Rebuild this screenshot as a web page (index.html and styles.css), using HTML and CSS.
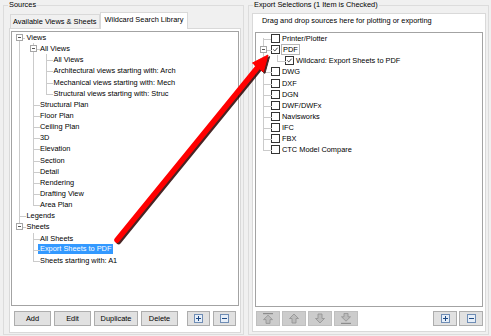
FILE: index.html
```html
<!DOCTYPE html>
<html lang="en">
<head>
  <meta charset="UTF-8" />
  <title>Export Setup</title>
  <link rel="stylesheet" href="styles.css">
</head>
<body>
  <div class="window">
    <fieldset class="group sources">
      <legend>Sources</legend>
      <div class="tabs">
        <div class="tab">Available Views &amp; Sheets</div>
        <div class="tab active">Wildcard Search Library</div>
      </div>
      <div class="tab-page">
        <div class="tree-box">
          <ul class="tree">
            <li><span class="exp"></span><span class="row">Views</span>
              <ul>
                <li><span class="exp"></span><span class="row">All Views</span>
                  <ul>
                    <li><span class="row">All Views</span></li>
                    <li><span class="row">Architectural views starting with: Arch</span></li>
                    <li><span class="row">Mechanical views starting with: Mech</span></li>
                    <li><span class="row">Structural views starting with: Struc</span></li>
                  </ul>
                </li>
                <li><span class="row">Structural Plan</span></li>
                <li><span class="row">Floor Plan</span></li>
                <li><span class="row">Ceiling Plan</span></li>
                <li><span class="row">3D</span></li>
                <li><span class="row">Elevation</span></li>
                <li><span class="row">Section</span></li>
                <li><span class="row">Detail</span></li>
                <li><span class="row">Rendering</span></li>
                <li><span class="row">Drafting View</span></li>
                <li><span class="row">Area Plan</span></li>
              </ul>
            </li>
            <li><span class="row">Legends</span></li>
            <li><span class="exp"></span><span class="row">Sheets</span>
              <ul>
                <li><span class="row">All Sheets</span></li>
                <li><span class="row"><span class="sel">Export Sheets to PDF</span></span></li>
                <li><span class="row">Sheets starting with: A1</span></li>
              </ul>
            </li>
          </ul>
        </div>
        <div class="buttons">
          <button class="btn w37">Add</button>
          <button class="btn w37">Edit</button>
          <button class="btn w44">Duplicate</button>
          <button class="btn w37">Delete</button>
          <span class="spacer"></span>
          <button class="btn w23 icon">
            <svg width="9" height="9" viewBox="0 0 9 9"><rect x="0.5" y="0.5" width="8" height="8" fill="#e6eef8" stroke="#6f8db5"/><path d="M4.5 2 V7 M2 4.5 H7" stroke="#1d4a85"/></svg>
          </button>
          <button class="btn w23 icon">
            <svg width="9" height="9" viewBox="0 0 9 9"><rect x="0.5" y="0.5" width="8" height="8" fill="#e6eef8" stroke="#6f8db5"/><path d="M2 4.5 H7" stroke="#1d4a85"/></svg>
          </button>
        </div>
      </div>
    </fieldset>

    <fieldset class="group exports">
      <legend>Export Selections (1 Item is Checked)</legend>
      <div class="panel">
        <div class="hint">Drag and drop sources here for plotting or exporting</div>
        <div class="tree-box">
          <ul class="tree checks">
            <li><span class="row"><span class="cb"></span>Printer/Plotter</span></li>
            <li><span class="exp"></span><span class="row"><span class="cb"><svg viewBox="0 0 9 9"><path d="M1.6 4.4 L3.6 6.4 L7.2 2.2" /></svg></span><span class="focus">PDF</span></span>
              <ul>
                <li><span class="row"><span class="cb"><svg viewBox="0 0 9 9"><path d="M1.6 4.4 L3.6 6.4 L7.2 2.2" /></svg></span>Wildcard: Export Sheets to PDF</span></li>
              </ul>
            </li>
            <li><span class="row"><span class="cb"></span>DWG</span></li>
            <li><span class="row"><span class="cb"></span>DXF</span></li>
            <li><span class="row"><span class="cb"></span>DGN</span></li>
            <li><span class="row"><span class="cb"></span>DWF/DWFx</span></li>
            <li><span class="row"><span class="cb"></span>Navisworks</span></li>
            <li><span class="row"><span class="cb"></span>IFC</span></li>
            <li><span class="row"><span class="cb"></span>FBX</span></li>
            <li><span class="row"><span class="cb"></span>CTC Model Compare</span></li>
          </ul>
        </div>
        <div class="buttons right">
          <button class="btn w24 off">
            <svg width="12" height="11" viewBox="0 0 12 11"><rect x="1" y="0" width="10" height="1.2" fill="#8c8c8c"/><path d="M6 2.2 L10.5 6.6 H8 V10.4 H4 V6.6 H1.5 Z" fill="#bcbcbc" stroke="#909090" stroke-width="0.8"/></svg>
          </button>
          <button class="btn w24 off">
            <svg width="12" height="11" viewBox="0 0 12 11"><path d="M6 1 L10.5 5.5 H8 V10 H4 V5.5 H1.5 Z" fill="#bcbcbc" stroke="#909090" stroke-width="0.8"/></svg>
          </button>
          <button class="btn w24 off">
            <svg width="12" height="11" viewBox="0 0 12 11"><path d="M6 10 L10.5 5.5 H8 V1 H4 V5.5 H1.5 Z" fill="#bcbcbc" stroke="#909090" stroke-width="0.8"/></svg>
          </button>
          <button class="btn w24 off">
            <svg width="12" height="11" viewBox="0 0 12 11"><path d="M6 8.2 L10.5 3.8 H8 V0.4 H4 V3.8 H1.5 Z" fill="#bcbcbc" stroke="#909090" stroke-width="0.8"/><rect x="1" y="9.8" width="10" height="1.2" fill="#8c8c8c"/></svg>
          </button>
          <span class="spacer"></span>
          <button class="btn w24 icon">
            <svg width="9" height="9" viewBox="0 0 9 9"><rect x="0.5" y="0.5" width="8" height="8" fill="#e6eef8" stroke="#6f8db5"/><path d="M4.5 2 V7 M2 4.5 H7" stroke="#1d4a85"/></svg>
          </button>
          <button class="btn w24 icon">
            <svg width="9" height="9" viewBox="0 0 9 9"><rect x="0.5" y="0.5" width="8" height="8" fill="#e6eef8" stroke="#6f8db5"/><path d="M2 4.5 H7" stroke="#1d4a85"/></svg>
          </button>
        </div>
      </div>
    </fieldset>
  </div>

  <svg class="arrow" width="491" height="336" viewBox="0 0 491 336">
    <defs>
      <filter id="soft"><feGaussianBlur stdDeviation="0.6" /></filter>
    </defs>
    <g transform="translate(1.6 1.6)" fill="#2a0000" stroke="#2a0000" filter="url(#soft)" opacity="0.85">
      <line x1="117" y1="240" x2="258" y2="67" stroke-width="5.5" stroke-linecap="round" />
      <polygon points="268,55 252.5,63 263.3,71.8" stroke-width="1" />
    </g>
    <g fill="#ff0000" stroke="#ff0000">
      <line x1="117" y1="240" x2="258" y2="67" stroke-width="5.5" stroke-linecap="round" />
      <polygon points="268,55 252.5,63 263.3,71.8" stroke-width="1" />
    </g>
  </svg>
</body>
</html>
```

FILE: styles.css
```css
* {
  box-sizing: border-box;
}
body {
  margin: 0;
  width: 491px;
  height: 336px;
  background: #f0f0f0;
  color: #000;
  font-family: "Liberation Sans", Arial, sans-serif;
  font-size: 7.4px;
  overflow: hidden;
  position: relative;
}
.window {
  display: flex;
  height: 336px;
  padding-left: 3px;
}
.group {
  margin: 0;
  min-width: 0;
  height: 335px;
  border: 1px solid #dcdcdc;
}
.group legend {
  padding: 0 1px;
  line-height: 10px;
}
.sources {
  width: 241px;
  padding: 2px 2px 1px 5px;
}
.sources legend {
  margin-left: -1px;
}
.exports {
  width: 241px;
  margin-left: 4px;
  padding: 3px 2px 2px 3px;
}
.exports legend {
  margin-left: 1px;
}

/* tabs */
.tabs {
  display: flex;
  align-items: flex-end;
  height: 16px;
  padding-left: 1px;
  position: relative;
  z-index: 1;
}
.tab {
  height: 14px;
  padding: 0 2px;
  line-height: 13px;
  border: 1px solid #d9d9d9;
  border-bottom: none;
  background: #f0f0f0;
  white-space: nowrap;
}
.tab.active {
  height: 17px;
  margin-bottom: -1px;
  padding: 0 4px;
  line-height: 14px;
  background: #fff;
}
.tab-page {
  height: 305px;
  padding: 2px 1px 6px;
  border: 1px solid #d9d9d9;
  background: #fff;
}
.panel {
  height: 319px;
  padding: 0 2px 5px 0;
  border: 1px solid #d9d9d9;
  background: #fff;
}
.hint {
  height: 18px;
  padding-left: 9px;
  line-height: 14px;
}
.exports .tree-box {
  margin-left: 2px;
}

/* tree views */
.tree-box {
  height: 275px;
  border: 1px solid #a3a3a3;
  background: #fff;
  overflow: hidden;
}
.tree, .tree ul {
  list-style: none;
  margin: 0;
}
.tree {
  padding: 0 0 0 7px;
}
.tree ul {
  padding-left: 6px;
}
.tree li {
  position: relative;
  padding-left: 7.5px;
}
.tree li::before {
  content: "";
  position: absolute;
  left: 0;
  top: 0;
  width: 6px;
  height: 6px;
  border-left: 1px solid #cbcbcb;
  border-bottom: 1px solid #cbcbcb;
}
.tree li::after {
  content: "";
  position: absolute;
  left: 0;
  top: 5px;
  bottom: 0;
  border-left: 1px solid #cbcbcb;
}
.tree li:last-child::after {
  display: none;
}
.tree > li:first-child::before {
  border-left: none;
}
.row {
  display: block;
  height: 11.15px;
  line-height: 11.15px;
  white-space: nowrap;
}
.exp {
  position: absolute;
  z-index: 1;
  left: -3px;
  top: 2px;
  width: 7px;
  height: 7px;
  border: 1px solid #a6a6a6;
  background: #fff;
}
.exp::before {
  content: "";
  position: absolute;
  left: 1px;
  top: 2px;
  width: 3px;
  height: 1px;
  background: #555;
}
.sel {
  display: inline-block;
  height: 10px;
  margin-left: -2px;
  padding: 0 2px;
  line-height: 10px;
  vertical-align: top;
  margin-top: 0.5px;
  background: #3399ff;
  color: #fff;
}
.checks li {
  padding-left: 8px;
}
.checks li::before {
  width: 8px;
}
.cb {
  display: inline-block;
  width: 9px;
  height: 9px;
  margin: 1px 2px 0 0;
  vertical-align: top;
  border: 1px solid #333;
  background: #fff;
}
.cb svg {
  display: block;
  width: 7px;
  height: 7px;
  fill: none;
  stroke: #222;
  stroke-width: 1.1;
}
.focus {
  display: inline-block;
  height: 11px;
  margin-left: -1px;
  padding: 0 1px;
  line-height: 9px;
  vertical-align: top;
  border: 1px solid #b5b5b5;
}

/* button rows */
.buttons {
  display: flex;
  gap: 3px;
  height: 15px;
  margin-top: 5px;
  padding: 0 3px;
}
.buttons.right {
  gap: 2px;
  margin-top: 4px;
  padding: 0 0 0 3px;
}
.spacer {
  flex: 1;
}
.btn {
  height: 15px;
  padding: 0;
  border: 1px solid #adadad;
  background: #e1e1e1;
  color: #000;
  font-family: inherit;
  font-size: 7.4px;
  line-height: 13px;
  display: flex;
  align-items: center;
  justify-content: center;
}
.btn.off {
  border-color: #bfbfbf;
  background: #cccccc;
}
.w23 { width: 23px; }
.w24 { width: 24px; }
.w37 { width: 37px; }
.w44 { width: 44px; }

.arrow {
  position: absolute;
  left: 0;
  top: 0;
  pointer-events: none;
}
```
